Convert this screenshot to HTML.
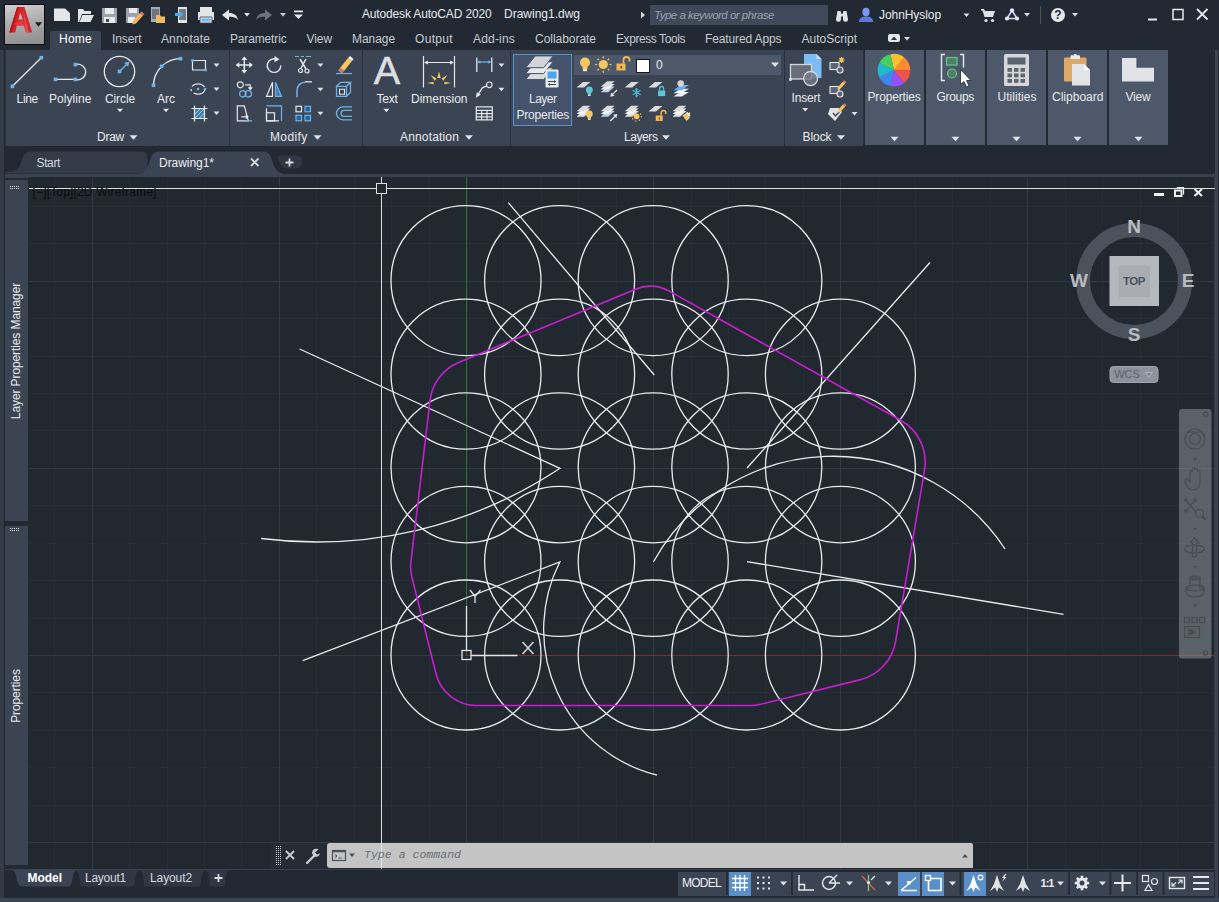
<!DOCTYPE html>
<html><head><meta charset="utf-8"><title>Autodesk AutoCAD 2020 Drawing1.dwg</title>
<style>
*{box-sizing:border-box;margin:0;padding:0}
html,body{width:1219px;height:902px;overflow:hidden;background:#222933;font-family:"Liberation Sans",sans-serif;font-size:12px;color:#e6e9ee}
.abs{position:absolute}
.t{position:absolute;white-space:pre}
.panel{position:absolute;top:50px;height:96px;background:#3b4453}
.cpanel{position:absolute;top:50px;height:95px;background:#4d586a}
#draw{position:absolute;left:29px;top:177px;width:1186px;height:692px;background:#212830;overflow:hidden}
</style></head><body>

<div class="abs" style="left:0;top:0;width:1219px;height:50px;background:#222933"></div>
<div class="abs" style="left:50px;top:31px;width:51px;height:19px;background:#3b4453;border-radius:2px 2px 0 0"></div>
<div class="abs" style="left:4px;top:4px;width:41px;height:41px;background:linear-gradient(170deg,#cfcfcf,#b0b0b0 40%,#8b8b8b);border:1px solid #0c0d0f"></div>
<svg class="abs" style="left:0;top:0" width="1219" height="50" viewBox="0 0 1219 50" fill="none">
<path fill-rule="evenodd" d="M9.200 32.400L17.200 6.900H24.400L32.200 32.400H26L24 25.500H16.800L15.300 32.400ZM18.300 19.600H22.900L20.300 12.500Z" fill="#d9232b"/>
<path d="M9.200 32.400L17.200 6.900H19L12 32.400Z" fill="#b5161f"/>
<path d="M16.800 25.500L24 25.500L22.900 19.600L14.500 23.500Z" fill="#e8393d"/>
<path d="M26 32.400L29 32.400L22.500 8Z" fill="#ef6a62" fill-opacity=".6"/>
<path d="M35 22.300h7l-3.500 4.500Z" fill="#1c1f24"/>
<g fill="#e3e5e8">
<path d="M54 8.500h11l5 4.500v8H54Z"/>
<path d="M78 9h5l1.5 2H91v3H82l-3 8h-1Z"/><path d="M82.5 15H94l-3.500 7H79.500Z"/>
<path d="M102 8h15v15h-15Z" fill="#9da3ab"/><path d="M105 8h9v6h-9Z" fill="#e9ebee"/><path d="M104 17h11v6h-11Z" fill="#e9ebee"/><path d="M106 19h3v3h-3Z" fill="#3b4453"/>
<path d="M126 8h13v8l-5 7h-8Z" fill="#9da3ab"/><path d="M129 8h8v5h-8Z" fill="#e9ebee"/><path d="M128 17h7v6h-7Z" fill="#e9ebee"/>
<path d="M133 21l7-8 3 2.5-7 8-3.5 1Z" fill="#f0b35e"/><path d="M140 13l1.500-1.500 3 2.5-1.500 1.500Z" fill="#e8706a"/>
<path d="M151 7h9v15h-9Z" fill="#a6acb4"/><path d="M152 9h7v10h-7Z" fill="#6e7680"/>
<path d="M156 15h4l1 1.5h4V23h-9Z" fill="#f1b95f"/>
<path d="M178 7h9v16h-9Z" fill="#e3e5e8"/><path d="M179 9h7v11h-7Z" fill="#6f7781"/>
<path d="M175 13h4v-2.500l4.500 4-4.500 4V16h-4Z" fill="#4fa9ea"/>
<path d="M200 7h12v5h-12Z"/><path d="M198 12h16v8h-16Z"/><path d="M200 17h12v6h-12Z" fill="#e3e5e8" stroke="#3b4453" stroke-width=".8"/><path d="M201.500 18.500h9v3h-9Z" fill="#6cb7ee"/>
<path d="M222 15l7-5.500v3.500c5 0 8 2 9 7-2-2.500-5-3.500-9-3.200v3.700Z"/>
<path d="M244 13h6l-3 3.500Z"/>
<path d="M272 15l-7-5.500v3.500c-5 0-8 2-9 7 2-2.500 5-3.500 9-3.200v3.700Z" fill="#6c737d"/>
<path d="M280 13h6l-3 3.500Z" fill="#c9cdd2"/>
<path d="M294 10.500h9v1.800h-9Z"/><path d="M294 14.500h9l-4.500 4.500Z"/>
</g>
<path d="M641 11.500l4 3.500-4 3.500Z" fill="#d9dce1"/>
<rect x="650" y="5" width="178" height="20" fill="#3f4959"/>
<path d="M836 19l1.500-8h3l1 3h1l1-3h3l1.500 8a2.500 2.500 0 0 1-5 .5v-3h-2v3a2.500 2.500 0 0 1-5-.5Z" fill="#dfe2e6"/>
<ellipse cx="866" cy="12" rx="3.600" ry="4.300" fill="#7b98ee"/><path d="M859 22c0-4 2.500-5.500 7-5.500s7 1.500 7 5.500Z" fill="#5b7bdc"/>
<path d="M963.500 13.500h6l-3 3.500Z" fill="#d9dce1"/>
<g fill="#dfe2e6"><path d="M981 9h3l1 2h10l-2 6h-8.500l-2-6.500H981Z"/><circle cx="986" cy="20.500" r="1.600"/><circle cx="992.500" cy="20.500" r="1.600"/></g>
<path d="M1012 10.500l5 8h-10Z" stroke="#cfd2ee" stroke-width="1.600"/><circle cx="1012" cy="10.300" r="2.100" fill="#e4e6f4"/><circle cx="1007" cy="18.500" r="2.100" fill="#e4e6f4"/><circle cx="1017" cy="18.500" r="2.100" fill="#e4e6f4"/>
<path d="M1024 13h6l-3 3.500Z" fill="#d9dce1"/>
<path d="M1040.500 6v18" stroke="#4a5361" stroke-width="1"/>
<circle cx="1058" cy="15" r="7" fill="#e6e8eb"/>
<path d="M1072 13h6l-3 3.500Z" fill="#d9dce1"/>
<path d="M1148 19.500h9" stroke="#e6e8eb" stroke-width="2"/>
<rect x="1173" y="9.500" width="10" height="10" stroke="#e6e8eb" stroke-width="1.500"/>
<path d="M1197 9l10.500 10.500M1207.500 9l-10.500 10.500" stroke="#e6e8eb" stroke-width="1.800"/>
<rect x="888" y="34" width="12" height="8" rx="2" fill="#e3e5e8"/><path d="M891 40l3-3.500 3 3.500Z" fill="#2a313c"/>
<path d="M904 37h6l-3 3.500Z" fill="#d9dce1"/>
</svg>
<div class="abs" style="left:1053px;top:7px;width:10px;height:16px;line-height:16px;text-align:center;font-weight:bold;font-size:12px;color:#222933">?</div>
<div class="t" style="left:362.0px;top:6.0px;height:17px;line-height:17px;font-size:12px;letter-spacing:-0.156px;color:#e6e9ee;font-family:'Liberation Sans',sans-serif;">Autodesk AutoCAD 2020</div><div class="t" style="left:504.0px;top:6.0px;height:17px;line-height:17px;font-size:12px;letter-spacing:-0.004px;color:#e6e9ee;font-family:'Liberation Sans',sans-serif;">Drawing1.dwg</div><div class="t" style="left:654.0px;top:7.0px;height:16px;line-height:16px;font-size:11.5px;letter-spacing:-0.505px;color:#98a1ad;font-family:'Liberation Sans',sans-serif;font-style:italic;">Type a keyword or phrase</div><div class="t" style="left:879.0px;top:6.5px;height:17px;line-height:17px;font-size:12px;letter-spacing:-0.070px;color:#e6e9ee;font-family:'Liberation Sans',sans-serif;">JohnHyslop</div><div class="t" style="left:59.0px;top:30.5px;height:17px;line-height:17px;font-size:12px;letter-spacing:0.246px;color:#ffffff;font-family:'Liberation Sans',sans-serif;">Home</div><div class="t" style="left:112.0px;top:30.5px;height:17px;line-height:17px;font-size:12px;letter-spacing:-0.086px;color:#c6ccd4;font-family:'Liberation Sans',sans-serif;">Insert</div><div class="t" style="left:161.0px;top:30.5px;height:17px;line-height:17px;font-size:12px;letter-spacing:0.119px;color:#c6ccd4;font-family:'Liberation Sans',sans-serif;">Annotate</div><div class="t" style="left:230.0px;top:30.5px;height:17px;line-height:17px;font-size:12px;letter-spacing:-0.152px;color:#c6ccd4;font-family:'Liberation Sans',sans-serif;">Parametric</div><div class="t" style="left:306.5px;top:30.5px;height:17px;line-height:17px;font-size:12px;letter-spacing:-0.074px;color:#c6ccd4;font-family:'Liberation Sans',sans-serif;">View</div><div class="t" style="left:352.0px;top:30.5px;height:17px;line-height:17px;font-size:12px;letter-spacing:-0.062px;color:#c6ccd4;font-family:'Liberation Sans',sans-serif;">Manage</div><div class="t" style="left:415.0px;top:30.5px;height:17px;line-height:17px;font-size:12px;letter-spacing:0.328px;color:#c6ccd4;font-family:'Liberation Sans',sans-serif;">Output</div><div class="t" style="left:473.0px;top:30.5px;height:17px;line-height:17px;font-size:12px;letter-spacing:0.188px;color:#c6ccd4;font-family:'Liberation Sans',sans-serif;">Add-ins</div><div class="t" style="left:535.0px;top:30.5px;height:17px;line-height:17px;font-size:12px;letter-spacing:-0.034px;color:#c6ccd4;font-family:'Liberation Sans',sans-serif;">Collaborate</div><div class="t" style="left:616.0px;top:30.5px;height:17px;line-height:17px;font-size:12px;letter-spacing:-0.422px;color:#c6ccd4;font-family:'Liberation Sans',sans-serif;">Express Tools</div><div class="t" style="left:705.0px;top:30.5px;height:17px;line-height:17px;font-size:12px;letter-spacing:-0.120px;color:#c6ccd4;font-family:'Liberation Sans',sans-serif;">Featured Apps</div><div class="t" style="left:801.5px;top:30.5px;height:17px;line-height:17px;font-size:12px;letter-spacing:0.014px;color:#c6ccd4;font-family:'Liberation Sans',sans-serif;">AutoScript</div>
<div class="abs" style="left:5px;top:50px;width:859px;height:96px;background:#2a313c"></div>
<div class="panel" style="left:6px;width:223px"></div>
<div class="panel" style="left:230px;width:132px"></div>
<div class="panel" style="left:363px;width:147px"></div>
<div class="panel" style="left:511px;width:273px"></div>
<div class="panel" style="left:785px;width:78px"></div>
<div class="cpanel" style="left:865px;width:58.500px"></div>
<div class="cpanel" style="left:926px;width:58.500px"></div>
<div class="cpanel" style="left:987px;width:58.500px"></div>
<div class="cpanel" style="left:1048px;width:58.500px"></div>
<div class="cpanel" style="left:1109px;width:58.500px"></div>
<div class="abs" style="left:513px;top:53.5px;width:59px;height:72px;background:#44536b;border:1px solid #5b8fc9"></div>
<div class="abs" style="left:574px;top:55px;width:207px;height:20px;background:#4d586a"></div>
<svg class="abs" style="left:0;top:50px" width="1219" height="97" viewBox="0 50 1219 97" fill="none">
<path d="M12.4 86.3L41.3 57.7" stroke="#e6e8eb" stroke-width="1.3"/><rect x="10.6" y="84.5" width="3.6" height="3.6" fill="#6fb2e8"/><rect x="39.5" y="55.900000000000006" width="3.6" height="3.6" fill="#6fb2e8"/><path d="M55.5 79.4H75.4A7.8 7.8 0 1 0 75.4 64.600" stroke="#e6e8eb" stroke-width="1.3"/><rect x="53.7" y="77.60000000000001" width="3.6" height="3.6" fill="#6fb2e8"/><rect x="73.60000000000001" y="77.60000000000001" width="3.6" height="3.6" fill="#6fb2e8"/><rect x="73.60000000000001" y="62.8" width="3.6" height="3.6" fill="#6fb2e8"/><circle cx="119.500" cy="71.500" r="15.200" stroke="#e6e8eb" stroke-width="1.300"/><path d="M119.500 71.500L127.500 63.500" stroke="#6fb2e8" stroke-width="1.400"/><path d="M129.500 61.500l-1.300 5.300-4-4Z" fill="#6fb2e8"/><rect x="117.7" y="69.7" width="3.6" height="3.6" fill="#6fb2e8"/><path d="M153.500 85.300A27 27 0 0 1 180.500 58.700" stroke="#e6e8eb" stroke-width="1.300"/><rect x="151.7" y="83.5" width="3.6" height="3.6" fill="#6fb2e8"/><rect x="159.79999999999998" y="64.5" width="3.6" height="3.6" fill="#6fb2e8"/><rect x="178.7" y="56.900000000000006" width="3.6" height="3.6" fill="#6fb2e8"/><path d="M192.500 60.500H205.500V70H192.500Z" stroke="#e6e8eb" stroke-width="1.200"/><rect x="191.2" y="59.2" width="2.6" height="2.6" fill="#6fb2e8"/><rect x="204.2" y="68.7" width="2.6" height="2.6" fill="#6fb2e8"/><path d="M213.5 63.45h6l-3.0 3.5Z" fill="#dfe3e8"/><ellipse cx="198" cy="89" rx="7" ry="5.200" stroke="#e6e8eb" stroke-width="1.200" stroke-dasharray="14 3 2 3"/><rect x="196.8" y="87.8" width="2.4" height="2.4" fill="#6fb2e8"/><rect x="203.8" y="87.8" width="2.4" height="2.4" fill="#6fb2e8"/><path d="M213.5 87.45h6l-3.0 3.5Z" fill="#dfe3e8"/><rect x="194.500" y="108.500" width="10" height="10" fill="#3d7fb8"/><path d="M195 114l5-5M195 118l9-9M199 118.500l5.500-5.500" stroke="#9fd0f5" stroke-width="1"/><path d="M191.500 108.500h16M191.500 118.500h16M194.500 105.500v16M204.500 105.500v16" stroke="#e6e8eb" stroke-width="1.200"/><path d="M213.5 111.45h6l-3.0 3.5Z" fill="#dfe3e8"/><path d="M117.0 108.75h6l-3.0 3.5Z" fill="#dfe3e8"/><path d="M163.0 108.75h6l-3.0 3.5Z" fill="#dfe3e8"/><path d="M129.5 135.25h8l-4.0 4.5Z" fill="#dfe3e8"/><g transform="translate(244.3 65)"><path d="M-7.500 0H7.500M0-7.500V7.500" stroke="#e6e8eb" stroke-width="1.500"/><path d="M-8.500 0l3.500-3v6ZM8.500 0l-3.500-3v6ZM0-8.500l-3 3.500h6ZM0 8.500l-3-3.500h6Z" fill="#e6e8eb"/></g><g transform="translate(274 65.5)"><path d="M3-6A6.800 6.800 0 1 0 6.800 0" stroke="#e6e8eb" stroke-width="1.400"/><path d="M0.500-9.500l5 3.200-5 3Z" fill="#e6e8eb"/></g><g transform="translate(303 65)"><path d="M-8-8.500h4M-2-8.500h3M3-8.500h5" stroke="#6fb2e8" stroke-width="1.200"/><path d="M-3-6L3 4M3-6L-2 3" stroke="#e6e8eb" stroke-width="1.500"/><circle cx="-2.500" cy="5.500" r="2" stroke="#e6e8eb" stroke-width="1.200"/><circle cx="4" cy="6" r="2" stroke="#e6e8eb" stroke-width="1.200"/></g><path d="M317.4 63.45h6l-3.0 3.5Z" fill="#dfe3e8"/><g transform="translate(344 65)"><path d="M-4 3L4-7l4 3L0 6Z" fill="#f6c75f"/><path d="M-6 5.500l2-2.500 4 3-2 2.500Z" fill="#e8706a"/><path d="M-8 8.500H8" stroke="#6fb2e8" stroke-width="1.200"/><path d="M4-7l2-2 3.500 3L8-4Z" fill="#f2f2f2"/></g><g transform="translate(244.3 89.3)"><circle cx="-4" cy="-4.500" r="3" stroke="#e6e8eb" stroke-width="1.200"/><path d="M1-4.500h5v3.500" stroke="#e6e8eb" stroke-width="1.200"/><path d="M6 1.500l-2.500-3.500h5Z" fill="#e6e8eb"/><circle cx="-1.500" cy="4.500" r="3.200" stroke="#6fb2e8" stroke-width="1.300"/><circle cx="4" cy="4.500" r="3.200" stroke="#6fb2e8" stroke-width="1.300"/></g><g transform="translate(274 89.3)"><path d="M-1.500-7V7H-7.500Z" stroke="#e6e8eb" stroke-width="1.200"/><path d="M1.500-7V7H7.500Z" fill="#3d7fb8" stroke="#6fb2e8" stroke-width="1.200"/></g><g transform="translate(303 89.3)"><path d="M-6 8V1A8 8 0 0 1 2-7" stroke="#6fb2e8" stroke-width="1.500"/><path d="M2-7.500H9" stroke="#e6e8eb" stroke-width="1.300"/></g><path d="M317.4 87.75h6l-3.0 3.5Z" fill="#dfe3e8"/><g transform="translate(344 89.3)"><path d="M-7.500-3h10v10h-10ZM-7.500-3l4-4h10l-4 4M6.500-7v10l-4 4" stroke="#6fb2e8" stroke-width="1.300"/><path d="M-4.500 0h5v5h-5Z" stroke="#e6e8eb" stroke-width="1.100"/></g><g transform="translate(244.3 113.3)"><path d="M-7-7.500h7l4 15h-11Z" stroke="#e6e8eb" stroke-width="1.200"/><path d="M-3 3.500h6" stroke="#e6e8eb" stroke-width="1.200"/><path d="M4.500 3.500l-3-2.500v5Z" fill="#e6e8eb"/><path d="M1 7.500h7" stroke="#6fb2e8" stroke-width="1.200"/></g><g transform="translate(274 113.3)"><path d="M-7.500-7.500h15v15" stroke="#6fb2e8" stroke-width="1.200"/><path d="M-7.500-5v12.500h12.500" stroke="#e6e8eb" stroke-width="1.200"/><rect x="-7.500" y="-0.500" width="8" height="8" stroke="#e6e8eb" stroke-width="1.200"/></g><g transform="translate(303 113.3)"><rect x="-7" y="-7" width="5.500" height="5.500" stroke="#e6e8eb" stroke-width="1.200"/><rect x="2" y="-7" width="5.500" height="5.500" fill="#25639a" stroke="#6fb2e8" stroke-width="1.200"/><rect x="-7" y="2" width="5.500" height="5.500" fill="#25639a" stroke="#6fb2e8" stroke-width="1.200"/><rect x="2" y="2" width="5.500" height="5.500" fill="#25639a" stroke="#6fb2e8" stroke-width="1.200"/></g><path d="M317.4 111.75h6l-3.0 3.5Z" fill="#dfe3e8"/><g transform="translate(344 113.3)"><path d="M8-6.500H-1A6.500 6.500 0 0 0 -1 6.500H8" stroke="#6fb2e8" stroke-width="1.300"/><path d="M8-3H0A3 3 0 0 0 0 3H8" stroke="#6fb2e8" stroke-width="1.300"/></g><path d="M313.5 135.25h8l-4.0 4.5Z" fill="#dfe3e8"/><path d="M423.500 56V87.600M454.500 56V87.600M425 62.500H453" stroke="#e6e8eb" stroke-width="1.200"/><path d="M424 62.500l4-2v4ZM454 62.500l-4-2v4Z" fill="#e6e8eb"/><g fill="#f6c75f"><path d="M439 71.500l1.800 6.500h-3.600Z"/><path d="M430.500 75l6 3.500-1.800 2.200Z"/><path d="M447.500 75l-6 3.500 1.800 2.200Z"/><path d="M427 83l6.500-1.300.300 2.600Z"/><path d="M451 83l-6.500-1.300-.300 2.600Z"/></g><g transform="translate(484.3 65)"><path d="M-7.500-7.500V7M7.500-7.500V7" stroke="#e6e8eb" stroke-width="1.300"/><path d="M-6-3H6" stroke="#6fb2e8" stroke-width="1.300"/><path d="M-7-3l3-1.800v3.600ZM7-3l-3-1.800v3.600Z" fill="#6fb2e8"/></g><path d="M498.4 63.45h6l-3.0 3.5Z" fill="#dfe3e8"/><g transform="translate(484.3 89.3)"><path d="M-7 6.500L-2-1.500L2.500-3.500" stroke="#e6e8eb" stroke-width="1.300"/><circle cx="5" cy="-4.500" r="2.800" stroke="#e6e8eb" stroke-width="1.200"/><path d="M-8.500 8.500l1-5.500 4 2.500Z" fill="#e6e8eb"/></g><path d="M498.4 87.75h6l-3.0 3.5Z" fill="#dfe3e8"/><g transform="translate(484.3 113.3)"><path d="M-8-6.500h16v13h-16ZM-8-3h16M-8 0.300h16M-8 3.500h16M-2.700-3v9.500M2.700-3v9.500" stroke="#e6e8eb" stroke-width="1.200"/></g><path d="M383.4 108.75h6l-3.0 3.5Z" fill="#dfe3e8"/><path d="M465.0 135.25h8l-4.0 4.5Z" fill="#dfe3e8"/><path d="M535.2 67.8h18l-9.5 11.8h-18Z" fill="#d9dbdf" stroke="#44536b" stroke-width="1"/><path d="M535.2 61.8h18l-9.5 11.8h-18Z" fill="#e6e8eb" stroke="#44536b" stroke-width="1"/><path d="M535.2 55.9h18l-9.5 11.8h-18Z" fill="#d2d4d8" stroke="#44536b" stroke-width="1"/><rect x="545.5" y="69.500" width="13" height="18" rx="1" fill="#e9ebee"/><rect x="547.500" y="71.500" width="9" height="7" fill="#4da3f0"/><path d="M548 81.500h8M548 84.500h8" stroke="#3b4453" stroke-width="1"/><path d="M556 81.500l-2-1.500v3ZM548 84.500l2-1.500v3Z" fill="#3b4453"/><g transform="translate(585 64) scale(1.0)"><circle cx="0" cy="-1.500" r="5" fill="#f6c75f"/><path d="M-2.500 2h5v3h-5Z" fill="#f6c75f"/><path d="M-2 5h4v2.200h-4Z" fill="#eef0f2"/></g><g transform="translate(603.3 64.5) scale(1.0)"><circle r="4.600" fill="#f6c75f"/><path d="M0 -6.200V-8.200" transform="rotate(0)" stroke="#f6c75f" stroke-width="1.300"/><path d="M0 -6.200V-8.200" transform="rotate(45)" stroke="#f6c75f" stroke-width="1.300"/><path d="M0 -6.200V-8.200" transform="rotate(90)" stroke="#f6c75f" stroke-width="1.300"/><path d="M0 -6.200V-8.200" transform="rotate(135)" stroke="#f6c75f" stroke-width="1.300"/><path d="M0 -6.200V-8.200" transform="rotate(180)" stroke="#f6c75f" stroke-width="1.300"/><path d="M0 -6.200V-8.200" transform="rotate(225)" stroke="#f6c75f" stroke-width="1.300"/><path d="M0 -6.200V-8.200" transform="rotate(270)" stroke="#f6c75f" stroke-width="1.300"/><path d="M0 -6.200V-8.200" transform="rotate(315)" stroke="#f6c75f" stroke-width="1.300"/></g><g transform="translate(622 63.5) scale(1.0)"><path d="M-5.500 0h9v7h-9Z" fill="#f3b74f"/><path d="M1.500 0v-3.500a3 3 0 0 1 6 0v1.500" stroke="#f3b74f" stroke-width="1.800" fill="none"/><path d="M-1.500 2.500h1.500v2.500h-1.500Z" fill="#6b4a12"/></g><rect x="636.500" y="59.500" width="13" height="13" fill="#ffffff" stroke="#15181c" stroke-width="1"/><path d="M771.0 62.45h8l-4.0 4.5Z" fill="#dfe3e8"/><path d="M583.00 82.00h7.5l-6.5 5.6h-7.5Z" fill="#d9dbde"/><g transform="translate(589.3 91) scale(0.68)"><circle cx="0" cy="-1.500" r="5" fill="#56c8d8"/><path d="M-2.500 2h5v3h-5Z" fill="#56c8d8"/><path d="M-2 5h4v2.200h-4Z" fill="#eef0f2"/></g><path d="M607.20 86.60h7.5l-6.5 5.6h-7.5Z" fill="#b9d2ec"/><path d="M607.20 83.90h7.5l-6.5 5.6h-7.5Z" fill="#f1f2f4"/><path d="M607.20 81.20h7.5l-6.5 5.6h-7.5Z" fill="#d9dbde"/><path d="M617 90L612.85 94.15" stroke="#e6e8eb" stroke-width="1.300"/><path d="M610.3 96.7L611.15 92.46L614.54 95.85Z" fill="#e6e8eb"/><path d="M631.20 82.00h7.5l-6.5 5.6h-7.5Z" fill="#d9dbde"/><g transform="translate(636.600 92.500)" stroke="#45bcd8" stroke-width="1.300"><path d="M0-4.600V4.600M-4-2.300L4 2.300M-4 2.300L4-2.300"/><path d="M-1.500-3.600L0-2.400L1.500-3.600M-1.500 3.600L0 2.400L1.500 3.600" stroke-width=".9" fill="none"/></g><path d="M655.00 82.00h7.5l-6.5 5.6h-7.5Z" fill="#d9dbde"/><g transform="translate(661.6 90.5) scale(0.8)"><path d="M-4.500 0h9v7h-9Z" fill="#56c8d8"/><path d="M-2.500 0v-2.500a2.500 2.500 0 0 1 5 0v2.500" stroke="#56c8d8" stroke-width="1.600" fill="none"/></g><path d="M680.45 91.90h8.5l-7 4.6h-8.5Z" fill="#f1f2f4"/><path d="M680.45 88.70h8.5l-7 4.6h-8.5Z" fill="#f1f2f4"/><path d="M680.45 85.00h8.5l-7 5.2h-8.5Z" fill="#6aaef0"/><circle cx="680.700" cy="83.600" r="3.300" fill="#d6d2d3"/><path d="M583.00 111.10h7.5l-6.5 5.6h-7.5Z" fill="#e3e5e8"/><path d="M583.00 108.40h7.5l-6.5 5.6h-7.5Z" fill="#f1f2f4"/><path d="M583.00 105.70h7.5l-6.5 5.6h-7.5Z" fill="#d9dbde"/><g transform="translate(589.3 115) scale(0.68)"><circle cx="0" cy="-1.500" r="5" fill="#f6c75f"/><path d="M-2.500 2h5v3h-5Z" fill="#f6c75f"/><path d="M-2 5h4v2.200h-4Z" fill="#eef0f2"/></g><path d="M607.20 111.10h7.5l-6.5 5.6h-7.5Z" fill="#b9d2ec"/><path d="M607.20 108.40h7.5l-6.5 5.6h-7.5Z" fill="#f1f2f4"/><path d="M607.20 105.70h7.5l-6.5 5.6h-7.5Z" fill="#d9dbde"/><path d="M610.3 121L614.75 116.55" stroke="#e6e8eb" stroke-width="1.300"/><path d="M617.3 114L616.45 118.24L613.06 114.85Z" fill="#e6e8eb"/><path d="M631.20 111.10h7.5l-6.5 5.6h-7.5Z" fill="#e3e5e8"/><path d="M631.20 108.40h7.5l-6.5 5.6h-7.5Z" fill="#f1f2f4"/><path d="M631.20 105.70h7.5l-6.5 5.6h-7.5Z" fill="#d9dbde"/><circle cx="636.600" cy="116.300" r="2.900" fill="#f6c75f"/><circle cx="636.600" cy="116.300" r="4.700" stroke="#f6c75f" stroke-width="1.200" stroke-dasharray="1.200 2.490" fill="none"/><path d="M655.00 106.00h7.5l-6.5 5.6h-7.5Z" fill="#d9dbde"/><g transform="translate(660 115.5) scale(0.78)"><path d="M-5.500 0h9v7h-9Z" fill="#f3b74f"/><path d="M1.500 0v-3.500a3 3 0 0 1 6 0v1.500" stroke="#f3b74f" stroke-width="1.800" fill="none"/><path d="M-1.500 2.500h1.500v2.500h-1.500Z" fill="#6b4a12"/></g><path d="M679.00 111.10h7.5l-6.5 5.6h-7.5Z" fill="#e3e5e8"/><path d="M679.00 108.40h7.5l-6.5 5.6h-7.5Z" fill="#f1f2f4"/><path d="M679.00 105.70h7.5l-6.5 5.6h-7.5Z" fill="#d9dbde"/><path d="M682.500 115.500l3.500-2.500 4 5-3.500 3Z" fill="#f6c75f"/><path d="M686 113l1.500-1.200 1 1.300 1-0.800 1 1.300-1 .8 1 1.300-1.500 1.200Z" fill="#f0ead6"/><path d="M662.0 135.25h8l-4.0 4.5Z" fill="#dfe3e8"/><path d="M804 54h12.500l5 5v19h-17.500Z" fill="#7dbdf5"/><path d="M816.500 54l5 5h-5Z" fill="#c4e0fa"/><rect x="790.500" y="64.500" width="21" height="14.500" fill="#676e79" stroke="#d4d7db" stroke-width="1.300"/><circle cx="810.600" cy="78.500" r="7" fill="#737a85" fill-opacity=".8" stroke="#d4d7db" stroke-width="1.300"/><rect x="789.2" y="78.2" width="2.6" height="2.6" fill="#e4e6e9"/><path d="M802.2 107.95h6l-3.0 3.5Z" fill="#dfe3e8"/><g transform="translate(837 66)"><rect x="-7" y="-3.500" width="9" height="7" stroke="#e6e8eb" stroke-width="1.100" fill="#5d6573"/><circle cx="3" cy="4" r="3" stroke="#e6e8eb" stroke-width="1.100" fill="#5d6573"/><g stroke="#f6c75f" stroke-width="1.200"><path d="M4.500-9v6M1.500-6h6M2.400-8.100l4.200 4.200M6.600-8.100l-4.200 4.200"/></g></g><g transform="translate(837 90)"><rect x="-7" y="-3.500" width="9" height="7" stroke="#e6e8eb" stroke-width="1.100" fill="#5d6573"/><circle cx="3" cy="4" r="3" stroke="#e6e8eb" stroke-width="1.100" fill="#5d6573"/><path d="M1-3l5-5.500 2.200 2-5 5.500-2.700.7Z" fill="#f6c75f"/><path d="M6-8.500l1.300-1.300 2.200 2-1.300 1.300Z" fill="#e8706a"/></g><g transform="translate(837 113)"><path d="M-7-5h9l3 4-7 9-7-7Z" fill="#e1e3e6"/><path d="M-4 0l2.500 3 4.500-5" stroke="#3b4453" stroke-width="1.400" fill="none"/><path d="M1-3l5-5.500 2.200 2-5 5.500-2.700.7Z" fill="#f6c75f"/><path d="M6-8.500l1.300-1.300 2.200 2-1.300 1.300Z" fill="#e8706a"/></g><path d="M851.5 112.05h6l-3.0 3.5Z" fill="#dfe3e8"/><path d="M837.0 135.25h8l-4.0 4.5Z" fill="#dfe3e8"/><path d="M890.5 136.75h8l-4.0 4.5Z" fill="#dfe3e8"/><path d="M951.5 136.75h8l-4.0 4.5Z" fill="#dfe3e8"/><path d="M1012.5 136.75h8l-4.0 4.5Z" fill="#dfe3e8"/><path d="M1073.5 136.75h8l-4.0 4.5Z" fill="#dfe3e8"/><path d="M1134.5 136.75h8l-4.0 4.5Z" fill="#dfe3e8"/><path d="M894 70.2L890.41 54.30A16.3 16.3 0 0 1 904.19 57.48Z" fill="#ffc02e"/><path d="M894 70.2L904.19 57.48A16.3 16.3 0 0 1 910.30 70.24Z" fill="#ff8a30"/><path d="M894 70.2L910.30 70.24A16.3 16.3 0 0 1 904.13 82.97Z" fill="#f0524c"/><path d="M894 70.2L904.13 82.97A16.3 16.3 0 0 1 890.33 86.08Z" fill="#9650f5"/><path d="M894 70.2L890.33 86.08A16.3 16.3 0 0 1 879.30 77.24Z" fill="#3f86f0"/><path d="M894 70.2L879.30 77.24A16.3 16.3 0 0 1 879.33 63.09Z" fill="#22b8cf"/><path d="M894 70.2L879.33 63.09A16.3 16.3 0 0 1 890.41 54.30Z" fill="#44cf63"/><path d="M945 54.500h-3.500v26h3.500M960 54.500h3.500v13" stroke="#e6e8eb" stroke-width="1.400"/><rect x="946.500" y="57.500" width="10.500" height="7.500" fill="#4b7f68" stroke="#6cc48c" stroke-width="1.200"/><circle cx="952" cy="73.500" r="4.500" fill="#4b7f68" stroke="#6cc48c" stroke-width="1.200"/><path d="M960.500 69.500v15l3.500-3 2.500 5.500 2.500-1-2.500-5.500h4.500Z" fill="#ffffff" stroke="#23272e" stroke-width=".8"/><rect x="1004" y="54" width="25" height="32" rx="1.500" fill="#d5d7da"/><rect x="1007.500" y="57.500" width="18" height="7" fill="#5c646f"/><rect x="1007.5" y="68.0" width="4.500" height="3.800" fill="#5c646f"/><rect x="1014.0" y="68.0" width="4.500" height="3.800" fill="#5c646f"/><rect x="1020.5" y="68.0" width="4.500" height="3.800" fill="#5c646f"/><rect x="1007.5" y="73.5" width="4.500" height="3.800" fill="#5c646f"/><rect x="1014.0" y="73.5" width="4.500" height="3.800" fill="#5c646f"/><rect x="1020.5" y="73.5" width="4.500" height="3.800" fill="#5c646f"/><rect x="1007.5" y="79.0" width="4.500" height="3.800" fill="#5c646f"/><rect x="1014.0" y="79.0" width="4.500" height="3.800" fill="#5c646f"/><rect x="1020.5" y="79.0" width="4.500" height="3.800" fill="#5c646f"/><rect x="1064" y="57.500" width="22.500" height="24" rx="1" fill="#dba968"/><path d="M1071 57.500v-2h3v-1.500h2.500V55.500h3v2Z" fill="#e9ebee"/><rect x="1070.500" y="55.500" width="9.500" height="3.500" fill="#e9ebee"/><path d="M1072 64h12l6 6v15.500h-18Z" fill="#e2e4e7"/><path d="M1084 64l6 6h-6Z" fill="#f7f8f9"/><path d="M1122 58h14.400v9.800h17.600v13.800h-32Z" fill="#e1e3e6"/></svg>
<div class="abs" style="left:366px;top:48px;width:42px;height:44px;line-height:44px;font-size:39.5px;text-align:center;color:#dcdee1;-webkit-text-stroke:.6px #dcdee1">A</div><div class="t" style="left:16.5px;top:91.0px;height:17px;line-height:17px;font-size:12px;letter-spacing:-0.297px;color:#e8eaed;font-family:'Liberation Sans',sans-serif;">Line</div><div class="t" style="left:49.0px;top:91.0px;height:17px;line-height:17px;font-size:12px;letter-spacing:0.059px;color:#e8eaed;font-family:'Liberation Sans',sans-serif;">Polyline</div><div class="t" style="left:105.0px;top:91.0px;height:17px;line-height:17px;font-size:12px;letter-spacing:-0.112px;color:#e8eaed;font-family:'Liberation Sans',sans-serif;">Circle</div><div class="t" style="left:157.0px;top:91.0px;height:17px;line-height:17px;font-size:12px;letter-spacing:0.000px;color:#e8eaed;font-family:'Liberation Sans',sans-serif;">Arc</div><div class="t" style="left:97.0px;top:129.0px;height:17px;line-height:17px;font-size:12px;letter-spacing:-0.254px;color:#e8eaed;font-family:'Liberation Sans',sans-serif;">Draw</div><div class="t" style="left:270.0px;top:129.0px;height:17px;line-height:17px;font-size:12px;letter-spacing:0.359px;color:#e8eaed;font-family:'Liberation Sans',sans-serif;">Modify</div><div class="t" style="left:376.5px;top:91.0px;height:17px;line-height:17px;font-size:12px;letter-spacing:-0.254px;color:#e8eaed;font-family:'Liberation Sans',sans-serif;">Text</div><div class="t" style="left:411.0px;top:91.0px;height:17px;line-height:17px;font-size:12px;letter-spacing:-0.023px;color:#e8eaed;font-family:'Liberation Sans',sans-serif;">Dimension</div><div class="t" style="left:400.0px;top:129.0px;height:17px;line-height:17px;font-size:12px;letter-spacing:0.161px;color:#e8eaed;font-family:'Liberation Sans',sans-serif;">Annotation</div><div class="t" style="left:529.0px;top:91.0px;height:17px;line-height:17px;font-size:12px;letter-spacing:-0.506px;color:#e8eaed;font-family:'Liberation Sans',sans-serif;">Layer</div><div class="t" style="left:516.5px;top:106.5px;height:17px;line-height:17px;font-size:12px;letter-spacing:-0.220px;color:#e8eaed;font-family:'Liberation Sans',sans-serif;">Properties</div><div class="t" style="left:624.0px;top:129.0px;height:17px;line-height:17px;font-size:12px;letter-spacing:-0.422px;color:#e8eaed;font-family:'Liberation Sans',sans-serif;">Layers</div><div class="t" style="left:791.5px;top:90.0px;height:17px;line-height:17px;font-size:12px;letter-spacing:-0.169px;color:#e8eaed;font-family:'Liberation Sans',sans-serif;">Insert</div><div class="t" style="left:802.5px;top:129.0px;height:17px;line-height:17px;font-size:12px;letter-spacing:-0.069px;color:#e8eaed;font-family:'Liberation Sans',sans-serif;">Block</div><div class="t" style="left:867.5px;top:89.0px;height:17px;line-height:17px;font-size:12px;letter-spacing:-0.170px;color:#e8eaed;font-family:'Liberation Sans',sans-serif;">Properties</div><div class="t" style="left:936.5px;top:89.0px;height:17px;line-height:17px;font-size:12px;letter-spacing:-0.310px;color:#e8eaed;font-family:'Liberation Sans',sans-serif;">Groups</div><div class="t" style="left:997.5px;top:89.0px;height:17px;line-height:17px;font-size:12px;letter-spacing:0.036px;color:#e8eaed;font-family:'Liberation Sans',sans-serif;">Utilities</div><div class="t" style="left:1052.0px;top:89.0px;height:17px;line-height:17px;font-size:12px;letter-spacing:0.014px;color:#e8eaed;font-family:'Liberation Sans',sans-serif;">Clipboard</div><div class="t" style="left:1125.5px;top:89.0px;height:17px;line-height:17px;font-size:12px;letter-spacing:-0.199px;color:#e8eaed;font-family:'Liberation Sans',sans-serif;">View</div><div class="t" style="left:656.0px;top:57.0px;height:17px;line-height:17px;font-size:12px;letter-spacing:-1.188px;color:#e8eaed;font-family:'Liberation Sans',sans-serif;">0</div>
<div class="abs" style="left:0;top:147px;width:1219px;height:30px;background:#222933"></div>
<div class="abs" style="left:0;top:50px;width:4px;height:852px;background:#333b47"></div>
<div class="abs" style="left:4px;top:147px;width:1px;height:751px;background:#1f252d"></div>
<div class="abs" style="left:1215px;top:50px;width:3px;height:852px;background:#3b4453"></div>
<div class="abs" style="left:5px;top:173.500px;width:1210px;height:4px;background:#39414e"></div>
<svg class="abs" style="left:0;top:147px" width="1219" height="31" viewBox="0 147 1219 31" fill="none">
<path d="M5 173.500V172C18 172 20 168 22 160C24 152.500 27 151.500 33 151.500H140C146 151.500 147.500 154 147.500 158V173.500Z" fill="#343c49"/>
<path d="M140 173.500C147 172 148 166 150 160C152 153 155 151.500 161 151.500H262C268 151.500 270 154 272 160C274 167 276 172 283 173.500V178H140Z" fill="#3b4453"/>
<path d="M277 155.500H296C300 155.500 301.500 157.500 302 160C302.500 165 300 168.500 295 168.500H287C281 168.500 279 162 277 155.500Z" fill="#2f3743"/>
<path d="M251 158.500l7.500 7.500M258.500 158.500l-7.500 7.500" stroke="#d5d8dc" stroke-width="1.800"/>
<path d="M285.500 162.500h8M289.500 158.500v8" stroke="#d5d8dc" stroke-width="1.800"/>
</svg>
<div class="abs" style="left:5px;top:180px;width:22.500px;height:341px;background:#3b4453"></div>
<div class="abs" style="left:5px;top:525.500px;width:22.500px;height:339.500px;background:#3b4453"></div>
<svg class="abs" style="left:5px;top:181px" width="23" height="360" viewBox="5 181 23 360" fill="#dfe2e6">
<path d="M10 186h1v1h-1zM12 186h1v1h-1zM14 186h1v1h-1zM16 186h1v1h-1zM18 186h1v1h-1zM10 188h1v1h-1zM12 188h1v1h-1zM14 188h1v1h-1zM16 188h1v1h-1zM18 188h1v1h-1z"/>
<path d="M10 528h1v1h-1zM12 528h1v1h-1zM14 528h1v1h-1zM16 528h1v1h-1zM18 528h1v1h-1zM10 530h1v1h-1zM12 530h1v1h-1zM14 530h1v1h-1zM16 530h1v1h-1zM18 530h1v1h-1z"/>
</svg>
<div class="abs" style="left:5px;top:284px;width:22px;height:134px"><div style="position:absolute;left:11px;top:67px;width:140px;height:16px;line-height:16px;margin-left:-70px;margin-top:-8px;transform:rotate(-90deg);font-size:12px;letter-spacing:-0.1px;text-align:center;color:#e8eaed;white-space:nowrap">Layer Properties Manager</div></div>
<div class="abs" style="left:5px;top:668px;width:22px;height:56px"><div style="position:absolute;left:11px;top:28px;width:80px;height:16px;line-height:16px;margin-left:-40px;margin-top:-8px;transform:rotate(-90deg);font-size:12px;letter-spacing:-0.1px;text-align:center;color:#e8eaed;white-space:nowrap">Properties</div></div>
<div class="t" style="left:36.5px;top:154.5px;height:17px;line-height:17px;font-size:12px;letter-spacing:-0.369px;color:#d5d9de;font-family:'Liberation Sans',sans-serif;">Start</div><div class="t" style="left:159.0px;top:154.5px;height:17px;line-height:17px;font-size:12px;letter-spacing:-0.040px;color:#eef0f3;font-family:'Liberation Sans',sans-serif;">Drawing1*</div><div id="draw"><svg class="abs" style="left:0;top:0" width="1186" height="692" viewBox="29 177 1186 692" fill="none">
<path d="M54.5 177V869M129.5 177V869M167.5 177V869M204.5 177V869M241.5 177V869M316.5 177V869M354.5 177V869M391.5 177V869M429.5 177V869M503.5 177V869M541.5 177V869M578.5 177V869M616.5 177V869M691.5 177V869M728.5 177V869M765.5 177V869M803.5 177V869M878.5 177V869M915.5 177V869M952.5 177V869M990.5 177V869M1065.5 177V869M1102.5 177V869M1140.5 177V869M1177.5 177V869M29 206.5H1215M29 243.5H1215M29 318.5H1215M29 356.5H1215M29 393.5H1215M29 430.5H1215M29 505.5H1215M29 543.5H1215M29 580.5H1215M29 618.5H1215M29 692.5H1215M29 730.5H1215M29 767.5H1215M29 805.5H1215" stroke="#262d36" stroke-width="1"/>
<path d="M92.5 177V869M279.5 177V869M653.5 177V869M840.5 177V869M1027.5 177V869M1214.5 177V869M29 281.5H1215M29 468.5H1215M29 842.5H1215M29 655.5H466.0M466.5 655.0V869" stroke="#323a44" stroke-width="1"/>
<path d="M466.5 177V655.0" stroke="#2c7336" stroke-width="1"/>
<path d="M466.0 655.5H1215" stroke="#7a2d31" stroke-width="1"/>
<g stroke="#eaebed" stroke-width="1.3"><circle cx="466.0" cy="655.0" r="75"/><circle cx="559.6" cy="655.0" r="75"/><circle cx="653.2" cy="655.0" r="75"/><circle cx="746.8" cy="655.0" r="75"/><circle cx="840.4" cy="655.0" r="75"/><circle cx="466.0" cy="561.4" r="75"/><circle cx="559.6" cy="561.4" r="75"/><circle cx="653.2" cy="561.4" r="75"/><circle cx="746.8" cy="561.4" r="75"/><circle cx="840.4" cy="561.4" r="75"/><circle cx="466.0" cy="467.8" r="75"/><circle cx="559.6" cy="467.8" r="75"/><circle cx="653.2" cy="467.8" r="75"/><circle cx="746.8" cy="467.8" r="75"/><circle cx="840.4" cy="467.8" r="75"/><circle cx="466.0" cy="374.2" r="75"/><circle cx="559.6" cy="374.2" r="75"/><circle cx="653.2" cy="374.2" r="75"/><circle cx="746.8" cy="374.2" r="75"/><circle cx="840.4" cy="374.2" r="75"/><circle cx="466.0" cy="280.6" r="75"/><circle cx="559.6" cy="280.6" r="75"/><circle cx="653.2" cy="280.6" r="75"/><circle cx="746.8" cy="280.6" r="75"/>
<path d="M508.3 202.7L654.3 375M299.6 349L560 468.3A440 440 0 0 1 261.2 538.5M930 262.5L747 468M747 561.7L1063.5 614.3M302.7 660.7L559.8 562A150 150 0 0 0 657.1 775.2M653.5 561.7A205.7 205.7 0 0 1 1005 549"/>
</g>
<path d="M669.8 291.4A40 40 0 0 0 635.0 289.4L458.6 362.5A47 47 0 0 0 430.0 400.5L410.9 562.2A42 42 0 0 0 411.9 577.3L436.0 673.7A42 42 0 0 0 476.7 705.5L750.7 705.5A42 42 0 0 0 760.7 704.3L859.7 679.9A48 48 0 0 0 895.6 641.3L924.5 470.2A48 48 0 0 0 900.6 420.3Z" stroke="#c81ed2" stroke-width="1.6"/>
<g stroke="#e4e6e8" stroke-width="1.3"><path d="M466.5 650V606M471 655.5H517.5"/><rect x="462" y="650.5" width="9" height="9"/><path d="M470 590l5 6.5l5.5-6.5M475 596.5v6.5M522.5 642l11 12M533.5 642l-11 12"/></g>
<g stroke="#dcdee0" stroke-width="1"><path d="M29 188.5H376M386 188.5H1215M381.5 177V183.5M381.5 193.5V869"/><rect x="376.5" y="183.5" width="10" height="10"/></g>
</svg></div>

<svg class="abs" style="left:29px;top:177px" width="1186" height="692" viewBox="29 177 1186 692" fill="none">
<!-- viewport controls -->
<path d="M1154 194.500h10" stroke="#eceef0" stroke-width="3"/>
<rect x="1175" y="190.500" width="6.500" height="5.500" stroke="#eceef0" stroke-width="2"/><path d="M1177.500 188v-.500h6v7" stroke="#eceef0" stroke-width="1.200"/>
<path d="M1194.500 189l7.500 7M1202 189l-7.500 7" stroke="#eceef0" stroke-width="2.200"/>
<!-- viewcube -->
<circle cx="1134" cy="281" r="51" stroke="#4b525b" stroke-width="14"/>
<rect x="1109.500" y="256" width="49.500" height="50" fill="#b4b7bb"/>
<rect x="1118.500" y="265.500" width="31.500" height="31.500" fill="#a9adb2"/>
<!-- WCS -->
<rect x="1110" y="366.500" width="48" height="16" rx="3.500" fill="#8d939c" stroke="#a0a5ad" stroke-width="1"/>
<path d="M1145.500 372.500h7l-3.500 4.500Z" stroke="#b2b7be" stroke-width="1" fill="#7d838c"/>
<!-- navbar -->
<rect x="1179" y="409" width="32.500" height="249.500" rx="3" fill="#959aa0" fill-opacity=".5"/>
<g stroke="#474d55" stroke-width="1.200">
<circle cx="1205.500" cy="414" r="2.200"/><circle cx="1205.500" cy="653" r="2.200"/>
<circle cx="1195" cy="439" r="10"/><circle cx="1195" cy="439" r="5.500"/><path d="M1188 432h14l2 5"/>
<path d="M1186 483c-2-3-1-5 1-4l3 3v-10c0-2 2.500-2 2.500 0v-3c0-2 2.500-2 2.500 0v1c0-2 2.500-2 2.500 0v2c0-2 2.500-2 2.500 0v10c0 5-3 8-7 8-4 0-6-3-8-7Z"/>
<path d="M1185 499l11 13M1196 499l-11 13M1185 499h3M1185 499v3M1196 499h-3M1196 499v3M1185 512h3M1185 512v-3"/><circle cx="1199.500" cy="513.500" r="4"/><path d="M1202.500 516.500l3.500 3.500" stroke-width="2"/>
<ellipse cx="1194.500" cy="549" rx="10" ry="4"/><path d="M1192.500 557v-14h-2l4-5.500 4 5.500h-2v14Z"/>
<path d="M1186 592v-4h4v-10h10v10h4v4c0 3-4 5-9 5s-9-2-9-5Z"/><ellipse cx="1195" cy="578" rx="5" ry="1.800"/><ellipse cx="1195" cy="588" rx="9" ry="3"/>
<rect x="1184.500" y="617.500" width="5" height="5"/><rect x="1192" y="617.500" width="5" height="5"/><rect x="1199.500" y="617.500" width="5" height="5"/><rect x="1184.500" y="626.500" width="15" height="11"/><path d="M1189 629v6l6-3Z" fill="#474d55"/>
</g>
<g fill="#474d55"><path d="M1193 458.500h4l-2 2.500ZM1193 528h4l-2 2.500ZM1193 566h4l-2 2.500ZM1193 604.500h4l-2 2.500Z"/></g>
</svg>
<div class="abs" style="left:1119px;top:273px;width:30px;height:16px;line-height:16px;text-align:center;font-size:11.500px;font-weight:bold;letter-spacing:-0.5px;color:#4b525c">TOP</div>
<div class="abs" style="left:1123px;top:216px;width:22px;height:22px;line-height:22px;text-align:center;font-size:19px;font-weight:bold;color:#b9bcc0">N</div>
<div class="abs" style="left:1123px;top:323px;width:22px;height:24px;line-height:24px;text-align:center;font-size:19px;font-weight:bold;color:#b9bcc0">S</div>
<div class="abs" style="left:1067px;top:270px;width:24px;height:22px;line-height:22px;text-align:center;font-size:19px;font-weight:bold;color:#b9bcc0">W</div>
<div class="abs" style="left:1177px;top:270px;width:22px;height:22px;line-height:22px;text-align:center;font-size:19px;font-weight:bold;color:#b9bcc0">E</div>
<div class="abs" style="left:1113px;top:367px;width:28px;height:15px;line-height:15px;text-align:center;font-size:11px;color:#5a616b">WCS</div>
<div class="t" style="left:32.5px;top:183.5px;height:17px;line-height:17px;font-size:12px;letter-spacing:0.165px;color:#0b0d10;font-family:'Liberation Sans',sans-serif;">[−][Top][2D Wireframe]</div>
<div class="abs" style="left:271px;top:843px;width:57px;height:25px;background:#252c36"></div>
<div class="abs" style="left:327px;top:843px;width:646px;height:25px;background:#c4c4c4;border-radius:3px 2px 0 3px"></div><div class="abs" style="left:381px;top:843px;width:1px;height:25px;background:#ececec"></div>
<svg class="abs" style="left:272px;top:842.5px" width="702" height="26" viewBox="272 843 702 26" fill="none">
<g fill="#c9cdd2"><rect x="276" y="846" width="1" height="1"/><rect x="276" y="848" width="1" height="1"/><rect x="276" y="850" width="1" height="1"/><rect x="276" y="852" width="1" height="1"/><rect x="276" y="854" width="1" height="1"/><rect x="276" y="856" width="1" height="1"/><rect x="276" y="858" width="1" height="1"/><rect x="276" y="860" width="1" height="1"/><rect x="276" y="862" width="1" height="1"/><rect x="276" y="864" width="1" height="1"/><rect x="278" y="846" width="1" height="1"/><rect x="278" y="848" width="1" height="1"/><rect x="278" y="850" width="1" height="1"/><rect x="278" y="852" width="1" height="1"/><rect x="278" y="854" width="1" height="1"/><rect x="278" y="856" width="1" height="1"/><rect x="278" y="858" width="1" height="1"/><rect x="278" y="860" width="1" height="1"/><rect x="278" y="862" width="1" height="1"/><rect x="278" y="864" width="1" height="1"/><rect x="280" y="846" width="1" height="1"/><rect x="280" y="848" width="1" height="1"/><rect x="280" y="850" width="1" height="1"/><rect x="280" y="852" width="1" height="1"/><rect x="280" y="854" width="1" height="1"/><rect x="280" y="856" width="1" height="1"/><rect x="280" y="858" width="1" height="1"/><rect x="280" y="860" width="1" height="1"/><rect x="280" y="862" width="1" height="1"/><rect x="280" y="864" width="1" height="1"/></g>
<path d="M286 851l8 8M294 851l-8 8" stroke="#c9cdd2" stroke-width="1.800"/>
<path d="M307 863l7.500-7.500" stroke="#c9cdd2" stroke-width="2.400" stroke-linecap="round"/><path d="M318.500 849.500a4 4 0 1 0 1.500 4l-3 1-2-2Z" fill="#c9cdd2"/>
<rect x="332.500" y="850.500" width="13" height="10" fill="#c4c4c4" stroke="#4a4f57" stroke-width="1.200"/><path d="M333 851.500h12" stroke="#4a4f57" stroke-width="1.500"/><path d="M335 854.500l2 1.500-2 1.500M338.500 858h3" stroke="#4a4f57" stroke-width="1"/>
<path d="M349 853.500h6l-3 3.500Z" fill="#4a4f57"/>
<path d="M962 857.500h6l-3-3.500Z" fill="#4a4f57"/>
</svg>
<div class="t" style="left:364.0px;top:847.0px;height:16px;line-height:16px;font-size:11.5px;letter-spacing:0.027px;color:#6a6d72;font-family:'Liberation Mono',monospace;font-style:italic;">Type a command</div>
<div class="abs" style="left:5px;top:869.500px;width:1210px;height:28.500px;background:#222933"></div>
<div class="abs" style="left:5px;top:869px;width:1210px;height:1px;background:#39414e"></div>
<div class="abs" style="left:0;top:897.5px;width:1219px;height:4.5px;background:#3b4453"></div>
<div class="abs" style="left:678px;top:871.5px;width:536px;height:24px;background:#3b4453"></div>
<div class="abs" style="left:729px;top:871.5px;width:22px;height:24px;background:#5b8fca"></div>
<div class="abs" style="left:898px;top:871.5px;width:22px;height:24px;background:#5b8fca"></div>
<div class="abs" style="left:921.500px;top:871.5px;width:22.500px;height:24px;background:#5b8fca"></div>
<div class="abs" style="left:964px;top:871.5px;width:22px;height:24px;background:#5b8fca"></div>
<svg class="abs" style="left:0;top:869px" width="1219" height="29" viewBox="0 869 1219 29" fill="none">
<path d="M74 870C78 870 78.5 873 79.5 878C80.5 884 79 886.500 83 886.500H131C135 886.500 134.5 884 135.5 878C136.5 873 137 870 141 870Z" fill="#2f3743"/>
<path d="M138 870C142 870 142.5 873 143.5 878C144.5 884 143 886.500 147 886.500H197C201 886.500 200.5 884 201.5 878C202.5 873 203 870 207 870Z" fill="#2f3743"/>
<path d="M204 870C208 870 208.5 873 209.5 878C210.5 884 208 886.500 212 886.500H222.5C226.5 886.500 224.5 884 225.5 878C226.5 873 227 870 231 870Z" fill="#2f3743"/>
<path d="M11 870C15 870 15.5 873 16.5 878C17.5 884 19 886.500 23 886.500H67C71 886.500 71.5 884 72.5 878C73.5 873 74 870 78 870Z" fill="#3b4453"/>
<path d="M214.500 878h8M218.500 874v8" stroke="#d5d8dc" stroke-width="1.800"/>
<!-- separators -->
<path d="M727 871v24M792 871v24M960.500 871v24M1069 871v24M1110.500 871v24M1137 871v24M1163.500 871v24" stroke="#262d37" stroke-width="2"/>
<!-- grid -->
<path d="M732 878.500h16M732 883h16M732 887.500h16M735.500 875v16M740 875v16M744.500 875v16" stroke="#ffffff" stroke-width="1.300"/>
<!-- snap dots -->
<g fill="#e6e8eb"><rect x="757" y="876.500" width="2" height="2"/><rect x="762.500" y="876.500" width="2" height="2"/><rect x="768" y="876.500" width="2" height="2"/><rect x="757" y="882" width="2" height="2"/><rect x="762.500" y="882" width="2" height="2"/><rect x="768" y="882" width="2" height="2"/><rect x="757" y="887.500" width="2" height="2"/><rect x="762.500" y="887.500" width="2" height="2"/><rect x="768" y="887.500" width="2" height="2"/></g>
<path d="M780 881.500h7l-3.500 4Z" fill="#dfe2e6"/>
<!-- ortho -->
<path d="M799 875v15h15M799 884.500h5.500v5.500" stroke="#e6e8eb" stroke-width="1.400"/>
<!-- polar -->
<circle cx="829" cy="883" r="6.500" stroke="#e6e8eb" stroke-width="1.400"/><path d="M829 883h11M829 883l8-8" stroke="#e6e8eb" stroke-width="1.400"/>
<path d="M846 881.500h7l-3.500 4Z" fill="#dfe2e6"/>
<!-- isodraft -->
<path d="M868.500 875v16" stroke="#7ccf7c" stroke-width="1.300"/><path d="M862 876l13 14" stroke="#e05a5a" stroke-width="1.300"/><path d="M875 876l-4 4" stroke="#e6e8eb" stroke-width="1.200"/><circle cx="868.500" cy="882.500" r="1.600" fill="#e6e8eb"/>
<path d="M885 881.500h7l-3.500 4Z" fill="#dfe2e6"/>
<!-- otrack -->
<path d="M901 890.500h16M901 890.500l15-13" stroke="#ffffff" stroke-width="1.500"/><rect x="907" y="881" width="3.500" height="3.500" fill="#ffffff"/>
<!-- osnap -->
<path d="M928.500 878.500h12.500v12h-12.500Z" stroke="#ffffff" stroke-width="1.600"/><rect x="925.500" y="875.500" width="5" height="5" fill="#5b8fca" stroke="#ffffff" stroke-width="1.300"/>
<path d="M949 881.500h7l-3.500 4Z" fill="#dfe2e6"/>
<!-- annotation icons -->
<path transform="translate(973.500 883.500)" d="M0-8.500L3 .500L7 7.500L1.800 4L0 8.500L-1.800 4L-7 7.500L-3 .500Z" fill="#ffffff"/>
<circle cx="980.500" cy="877.500" r="2.300" stroke="#ffffff" stroke-width="1.200"/>
<path transform="translate(997 883.500)" d="M0-8.500L3 .500L7 7.500L1.800 4L0 8.500L-1.800 4L-7 7.500L-3 .500Z" fill="#e1e3e6"/><path d="M1005 874l-3 4h2l-2 4 4.500-5h-2l2-3Z" fill="#e1e3e6"/>
<path transform="translate(1023 883.500)" d="M0-8.500L3 .500L7 7.500L1.800 4L0 8.500L-1.800 4L-7 7.500L-3 .500Z" fill="#e1e3e6"/>
<path d="M1057 881.500h7l-3.500 4Z" fill="#dfe2e6"/>
<!-- gear -->
<g transform="translate(1082 883)"><circle r="4" stroke="#e6e8eb" stroke-width="3"/><g stroke="#e6e8eb" stroke-width="2.600"><path d="M0-7.200V-5M0 7.200V5M-7.200 0H-5M7.200 0H5M-5.100-5.100L-3.500-3.500M5.100 5.100L3.500 3.500M-5.100 5.100L-3.500 3.500M5.100-5.100L3.500-3.500"/></g></g>
<path d="M1099 881.500h7l-3.500 4Z" fill="#dfe2e6"/>
<path d="M1114 883h17M1122.500 874.500v17" stroke="#e6e8eb" stroke-width="2"/>
<rect x="1142.500" y="875.500" width="6" height="6" stroke="#e6e8eb" stroke-width="1.200"/><circle cx="1154.500" cy="881.500" r="3" stroke="#e6e8eb" stroke-width="1.200"/><path d="M1148.500 884.500l3.500 6h-7Z" stroke="#e6e8eb" stroke-width="1.200"/>
<rect x="1169.500" y="877.500" width="15" height="11" stroke="#e6e8eb" stroke-width="1.400"/><path d="M1172.500 885.500l3.500-3M1181.500 880.500l-3.500 3M1172 882.500v3.500h3.500M1178.500 880h3.500v3.500" stroke="#e6e8eb" stroke-width="1.200"/>
<path d="M1193 877h16M1193 883h16M1193 889h16" stroke="#e6e8eb" stroke-width="2"/>
</svg>
<div class="t" style="left:27.5px;top:869.5px;height:17px;line-height:17px;font-size:12px;letter-spacing:-0.034px;color:#ffffff;font-family:'Liberation Sans',sans-serif;font-weight:bold;">Model</div><div class="t" style="left:85.0px;top:869.5px;height:17px;line-height:17px;font-size:12px;letter-spacing:-0.243px;color:#d5d9de;font-family:'Liberation Sans',sans-serif;">Layout1</div><div class="t" style="left:150.0px;top:869.5px;height:17px;line-height:17px;font-size:12px;letter-spacing:-0.100px;color:#d5d9de;font-family:'Liberation Sans',sans-serif;">Layout2</div><div class="t" style="left:682.0px;top:875.0px;height:17px;line-height:17px;font-size:12px;letter-spacing:-0.738px;color:#eef0f3;font-family:'Liberation Sans',sans-serif;">MODEL</div><div class="t" style="left:1040.5px;top:876.0px;height:15px;line-height:15px;font-size:11px;letter-spacing:-0.969px;color:#eef0f3;font-family:'Liberation Sans',sans-serif;font-weight:bold;">1:1</div></body></html>
